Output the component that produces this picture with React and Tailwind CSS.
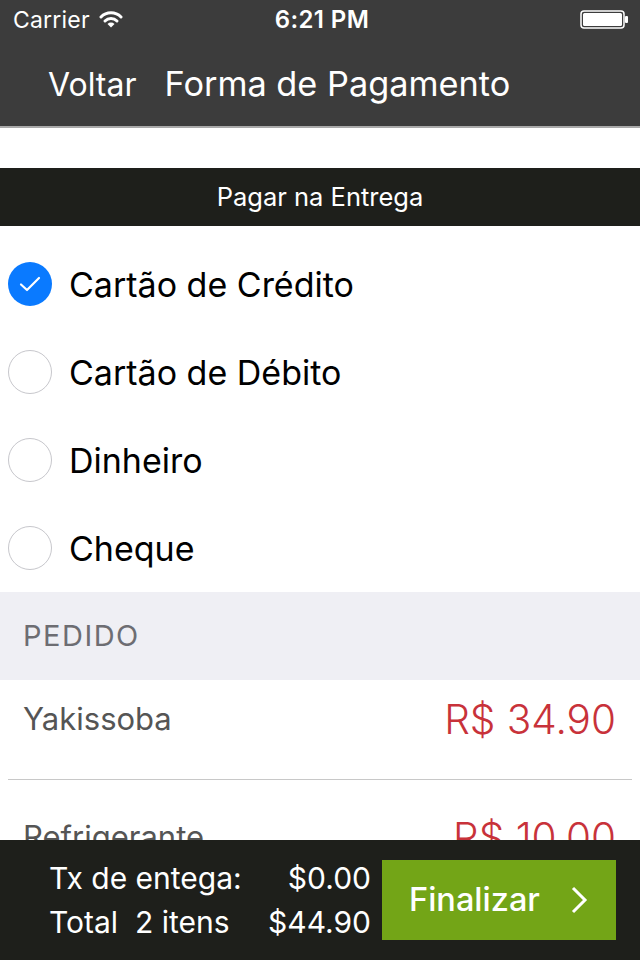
import React from "react";

const font = { fontFamily: "Inter, 'Noto Sans', sans-serif" };

function Wifi() {
  return (
    <svg width="24" height="18" viewBox="0 0 24 18">
      <path d="M2 7 A14 14 0 0 1 22 7" stroke="white" strokeWidth="3" fill="none" strokeLinecap="round" />
      <path d="M6 11 A8.5 8.5 0 0 1 18 11" stroke="white" strokeWidth="3" fill="none" strokeLinecap="round" />
      <path d="M12 17.5 L8.5 14 A5 5 0 0 1 15.5 14 Z" fill="white" />
    </svg>
  );
}

function Battery() {
  return (
    <svg width="50" height="20" viewBox="0 0 50 20">
      <rect x="1" y="1" width="43" height="17" rx="3" fill="none" stroke="white" strokeWidth="1.5" />
      <rect x="3" y="3" width="39" height="13" rx="1.5" fill="white" />
      <rect x="45" y="6" width="3" height="7" rx="1" fill="white" />
    </svg>
  );
}

function Radio({ checked }) {
  if (checked) {
    return (
      <div className="w-[44px] h-[44px] rounded-full bg-[#0a7aff] flex items-center justify-center shrink-0">
        <svg width="24" height="20" viewBox="0 0 24 20">
          <path d="M3 10.5 L9 16 L21 4" stroke="white" strokeWidth="2.2" fill="none" strokeLinecap="round" strokeLinejoin="round" />
        </svg>
      </div>
    );
  }
  return <div className="w-[44px] h-[44px] rounded-full border-[1.5px] border-[#c7c7cc] shrink-0" />;
}

export default function App() {
  const options = ["Cartão de Crédito", "Cartão de Débito", "Dinheiro", "Cheque"];
  return (
    <div className="w-[640px] h-[960px] bg-white flex flex-col overflow-hidden relative" style={font}>
      <div className="bg-[#3c3c3c] h-[128px] border-b-2 border-[#a9a9a9] flex flex-col shrink-0">
        <div className="h-[40px] flex items-center px-[13px] relative text-white text-[23px]">
          <span className="tracking-[0.2px]">Carrier</span>
          <span className="ml-[9px] mt-[-2px]"><Wifi /></span>
          <span className="absolute left-[4px] right-0 text-center font-semibold text-[24px] tracking-[0.4px]">6:21 PM</span>
          <span className="ml-auto mr-[-3px]"><Battery /></span>
        </div>
        <div className="flex items-baseline pt-[24px] text-white leading-[40px] pl-[48px]">
          <span className="text-[32px]">Voltar</span>
          <span className="ml-[28px] text-[34.3px]">Forma de Pagamento</span>
        </div>
      </div>
      <div className="h-[40px] shrink-0" />
      <div className="h-[58px] bg-[#1e1f1b] flex items-center justify-center text-white text-[25.5px] shrink-0">
        Pagar na Entrega
      </div>
      <div className="pt-[14px] shrink-0">
        {options.map((o, i) => (
          <div key={o} className="h-[88px] flex items-center pl-[8px]">
            <Radio checked={i === 0} />
            <span className="ml-[17px] text-[34px] text-black">{o}</span>
          </div>
        ))}
      </div>
      <div className="h-[88px] bg-[#efeff4] flex items-center pl-[23px] text-[29px] text-[#6d6d72] tracking-[1.5px] shrink-0">
        PEDIDO
      </div>
      <div className="h-[99px] flex items-start justify-between pl-[23px] pr-[24px] pt-[16px] shrink-0">
        <span className="text-[31px] text-[#555555]">Yakissoba</span>
        <span className="text-[40.5px] font-light text-[#c8323a] leading-none mt-[4px]">R$ 34.90</span>
      </div>
      <div className="mx-[8px] h-px bg-[#c8c8c8] shrink-0" />
      <div className="h-[99px] flex items-start justify-between pl-[23px] pr-[24px] pt-[34px] shrink-0">
        <span className="text-[31px] text-[#555555]">Refrigerante</span>
        <span className="text-[40.5px] font-light text-[#c8323a] leading-none mt-[4px]">R$ 10.00</span>
      </div>
      <div className="absolute left-0 right-0 bottom-0 h-[120px] bg-[#1e1f1b] flex items-center">
        <div className="flex flex-col pl-[49px] w-[371px] text-white text-[30px] leading-[44px]">
          <div className="flex justify-between">
            <span>Tx de entega:</span>
            <span>$0.00</span>
          </div>
          <div className="flex justify-between">
            <span>Total&nbsp; 2 itens</span>
            <span>$44.90</span>
          </div>
        </div>
        <div className="ml-[11px] w-[234px] h-[80px] bg-[#73a517] flex items-center pl-[27px] pr-[28px] text-white text-[32.5px] font-medium">
          <span>Finalizar</span>
          <svg className="ml-auto" width="18" height="28" viewBox="0 0 18 28">
            <path d="M3 2 L15 14 L3 26" stroke="white" strokeWidth="3" fill="none" />
          </svg>
        </div>
      </div>
    </div>
  );
}
